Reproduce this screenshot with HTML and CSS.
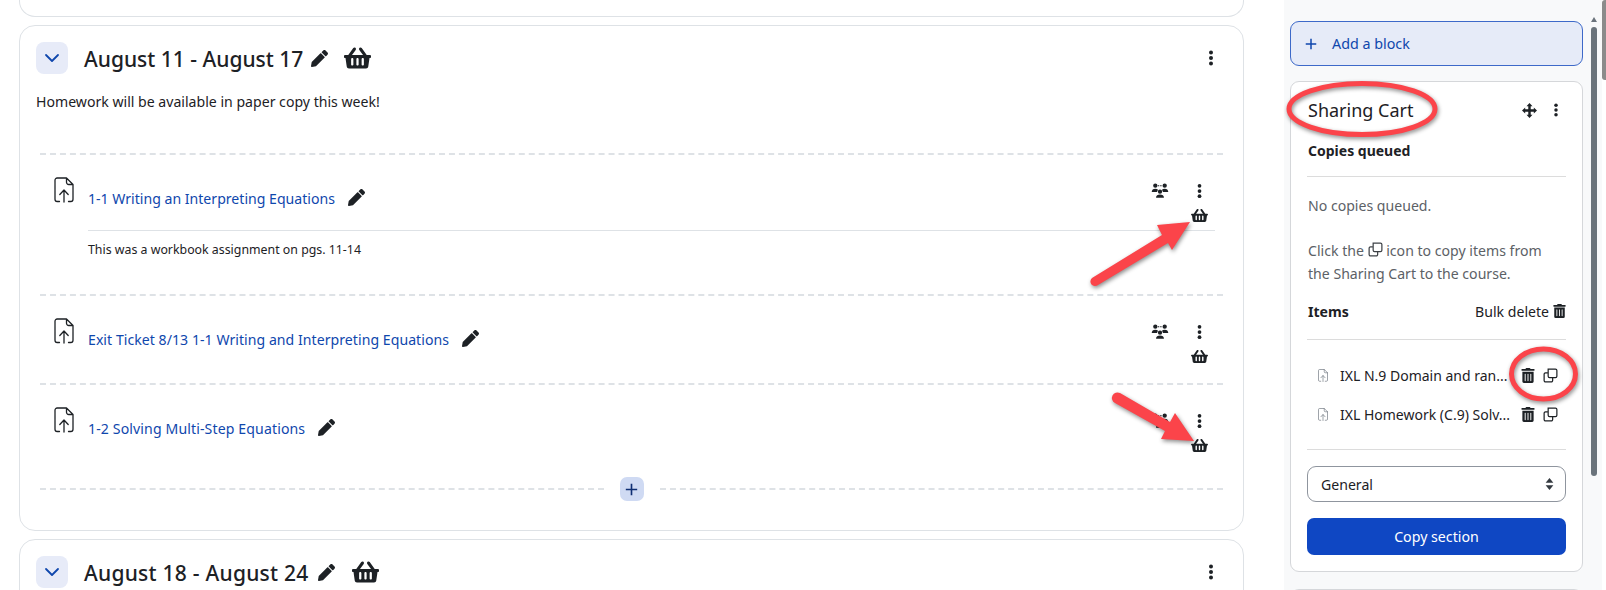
FILE: index.html
```html
<!DOCTYPE html>
<html lang="en">
<head>
<meta charset="utf-8">
<title>Sharing Cart</title>
<link rel="stylesheet" href="styles.css">
</head>
<body>
<svg class="defs" width="0" height="0" aria-hidden="true">
  <symbol id="i-pencil" viewBox="0 0 512 512"><path d="M497.9 142.1l-46.1 46.1c-4.7 4.7-12.3 4.7-17 0l-111-111c-4.7-4.7-4.7-12.3 0-17l46.1-46.1c18.7-18.7 49.1-18.7 67.9 0l60.1 60.1c18.8 18.7 18.8 49.1 0 67.9zM284.2 99.8L21.6 362.4.4 483.9c-2.9 16.4 11.4 30.6 27.8 27.8l121.5-21.3 262.6-262.6c4.7-4.7 4.7-12.3 0-17l-111-111c-4.8-4.7-12.4-4.7-17.1 0z"/></symbol>
  <symbol id="i-basket" viewBox="0 0 576 512"><path d="M576 216v16c0 13.255-10.745 24-24 24h-8l-26.113 182.788C514.509 462.435 494.257 480 470.37 480H105.63c-23.887 0-44.139-17.565-47.518-41.212L32 256h-8c-13.255 0-24-10.745-24-24v-16c0-13.255 10.745-24 24-24h67.341l106.78-146.821c10.395-14.292 30.407-17.453 44.701-7.058 14.293 10.395 17.453 30.408 7.058 44.701L170.477 192h235.046L326.12 82.821c-10.395-14.292-7.234-34.306 7.059-44.701 14.291-10.395 34.306-7.235 44.701 7.058L484.659 192H552c13.255 0 24 10.745 24 24zM312 392V280c0-13.255-10.745-24-24-24s-24 10.745-24 24v112c0 13.255 10.745 24 24 24s24-10.745 24-24zm112 0V280c0-13.255-10.745-24-24-24s-24 10.745-24 24v112c0 13.255 10.745 24 24 24s24-10.745 24-24zm-224 0V280c0-13.255-10.745-24-24-24s-24 10.745-24 24v112c0 13.255 10.745 24 24 24s24-10.745 24-24z"/></symbol>
  <symbol id="i-trash" viewBox="0 0 448 512"><path d="M32 464a48 48 0 0 0 48 48h288a48 48 0 0 0 48-48V128H32zm272-256a16 16 0 0 1 32 0v224a16 16 0 0 1-32 0zm-96 0a16 16 0 0 1 32 0v224a16 16 0 0 1-32 0zm-96 0a16 16 0 0 1 32 0v224a16 16 0 0 1-32 0zM432 32H312l-9.4-18.7A24 24 0 0 0 281.1 0H166.8a23.72 23.72 0 0 0-21.4 13.3L136 32H16A16 16 0 0 0 0 48v32a16 16 0 0 0 16 16h416a16 16 0 0 0 16-16V48a16 16 0 0 0-16-16z"/></symbol>
  <symbol id="i-kebab" viewBox="0 0 16 16"><circle cx="8" cy="2.5" r="2"/><circle cx="8" cy="8" r="2"/><circle cx="8" cy="13.5" r="2"/></symbol>
  <symbol id="i-copy" viewBox="0 0 16 16"><path fill="none" stroke="currentColor" stroke-width="1.3" d="M5.5 1.2h7.8a1.5 1.5 0 0 1 1.5 1.5v6.1a1.5 1.5 0 0 1-1.5 1.5H7a1.5 1.5 0 0 1-1.5-1.5z"/><path fill="none" stroke="currentColor" stroke-width="1.3" d="M5.2 5.2H2.7a1.5 1.5 0 0 0-1.5 1.5v6.6a1.5 1.5 0 0 0 1.5 1.5h6.1a1.5 1.5 0 0 0 1.5-1.5v-2.8"/></symbol>
  <symbol id="i-file" viewBox="0 0 20 26"><path fill="none" stroke="currentColor" stroke-width="1.3" stroke-linecap="round" stroke-linejoin="round" d="M5.5 24.5H3.2A2.2 2.2 0 0 1 1 22.3V3.2A2.2 2.2 0 0 1 3.2 1h9.3L19 7.5v14.8a2.2 2.2 0 0 1-2.2 2.2h-2.3M12.5 1v4.3a2.2 2.2 0 0 0 2.2 2.2H19M10 25V13.500M5.800 17.500L10 13l4.200 4.500"/></symbol>
  <symbol id="i-group" viewBox="0 0 20 16"><circle cx="4.800" cy="2.600" r="2.400"/><circle cx="15.200" cy="2.600" r="2.400"/><circle cx="10" cy="9.300" r="2.400"/><path d="M.8 9.800c0-2.500 1.600-3.800 4-3.800 1.300 0 2.300.4 3 1.100L6.600 9.800zM19.200 9.800c0-2.500-1.600-3.800-4-3.800-1.300 0-2.300.4-3 1.100l1.200 2.700zM5.600 16c0-2.300 1.900-3.500 4.400-3.500s4.400 1.200 4.400 3.500z"/><path fill="none" stroke="currentColor" stroke-width="1.200" stroke-dasharray="1.600 1" d="M7.600 2.800h4.800"/></symbol>
  <symbol id="i-move" viewBox="0 0 16 16"><path d="M8 0l3.200 3.400H9.300v3.300h3.300V4.800L16 8l-3.400 3.200V9.300H9.300v3.300h1.900L8 16l-3.200-3.400h1.900V9.300H3.400v1.900L0 8l3.400-3.200v1.900h3.300V3.400H4.800z"/></symbol>
  <symbol id="i-plus" viewBox="0 0 16 16"><path d="M7 1h2v6h6v2H9v6H7V9H1V7h6z"/></symbol>
  <symbol id="i-chevron" viewBox="0 0 16 16"><path fill="none" stroke="currentColor" stroke-width="1.800" stroke-linecap="round" stroke-linejoin="round" d="M2 5l6 6 6-6"/></symbol>
</svg>

<div class="page">
  <main class="course">
    <div class="section section-cut"></div>

    <section class="section">
      <header class="section-head">
        <button class="toggle"><svg class="ico ico-chevron"><use href="#i-chevron"/></svg></button>
        <h3 class="section-title">August 11 - August 17</h3>
        <svg class="ico ico-head-pencil"><use href="#i-pencil"/></svg>
        <svg class="ico ico-head-basket"><use href="#i-basket"/></svg>
        <svg class="ico ico-head-kebab"><use href="#i-kebab"/></svg>
      </header>
      <p class="summary">Homework will be available in paper copy this week!</p>
      <ul class="activities">
        <li class="activity activity-described">
          <svg class="ico ico-file"><use href="#i-file"/></svg>
          <div class="activity-body">
            <div class="activity-head">
              <a class="activity-link">1-1 Writing an Interpreting Equations</a>
              <svg class="ico ico-pencil"><use href="#i-pencil"/></svg>
              <div class="actions">
                <svg class="ico ico-group"><use href="#i-group"/></svg>
                <div class="action-stack">
                  <svg class="ico ico-kebab"><use href="#i-kebab"/></svg>
                  <svg class="ico ico-basket"><use href="#i-basket"/></svg>
                </div>
              </div>
            </div>
            <p class="activity-desc">This was a workbook assignment on pgs. 11-14</p>
          </div>
        </li>
        <li class="activity activity-plain">
          <svg class="ico ico-file"><use href="#i-file"/></svg>
          <div class="activity-body">
            <div class="activity-head activity-head-plain">
              <a class="activity-link link-track-s">Exit Ticket 8/13 1-1 Writing and Interpreting Equations</a>
              <svg class="ico ico-pencil"><use href="#i-pencil"/></svg>
              <div class="actions">
                <svg class="ico ico-group"><use href="#i-group"/></svg>
                <div class="action-stack">
                  <svg class="ico ico-kebab"><use href="#i-kebab"/></svg>
                  <svg class="ico ico-basket"><use href="#i-basket"/></svg>
                </div>
              </div>
            </div>
          </div>
        </li>
        <li class="activity activity-last">
          <svg class="ico ico-file"><use href="#i-file"/></svg>
          <div class="activity-body">
            <div class="activity-head activity-head-plain">
              <a class="activity-link link-track-m">1-2 Solving Multi-Step Equations</a>
              <svg class="ico ico-pencil"><use href="#i-pencil"/></svg>
              <div class="actions">
                <svg class="ico ico-group"><use href="#i-group"/></svg>
                <div class="action-stack">
                  <svg class="ico ico-kebab"><use href="#i-kebab"/></svg>
                  <svg class="ico ico-basket"><use href="#i-basket"/></svg>
                </div>
              </div>
            </div>
          </div>
        </li>
      </ul>
      <div class="add-row">
        <span class="add-line"></span>
        <button class="add-btn"><svg class="ico ico-add"><use href="#i-plus"/></svg></button>
        <span class="add-line"></span>
      </div>
    </section>

    <section class="section">
      <header class="section-head">
        <button class="toggle"><svg class="ico ico-chevron"><use href="#i-chevron"/></svg></button>
        <h3 class="section-title section-title-wide">August 18 - August 24</h3>
        <svg class="ico ico-head-pencil"><use href="#i-pencil"/></svg>
        <svg class="ico ico-head-basket"><use href="#i-basket"/></svg>
        <svg class="ico ico-head-kebab"><use href="#i-kebab"/></svg>
      </header>
    </section>
  </main>

  <aside class="side">
    <button class="add-block"><svg class="ico ico-block-plus"><use href="#i-plus"/></svg><span>Add a block</span></button>
    <section class="block">
      <header class="block-head">
        <h5 class="block-title">Sharing Cart</h5>
        <svg class="ico ico-move"><use href="#i-move"/></svg>
        <svg class="ico ico-block-kebab"><use href="#i-kebab"/></svg>
      </header>
      <h6 class="queued-title">Copies queued</h6>
      <hr class="rule rule-queued">
      <p class="muted no-copies">No copies queued.</p>
      <p class="muted hint">Click the <svg class="ico ico-copy-inline"><use href="#i-copy"/></svg> icon to copy items from<br>the Sharing Cart to the course.</p>
      <div class="items-head">
        <strong>Items</strong>
        <span class="bulk">Bulk delete <svg class="ico ico-trash"><use href="#i-trash"/></svg></span>
      </div>
      <hr class="rule rule-items">
      <ul class="items">
        <li class="item">
          <svg class="ico ico-item-file"><use href="#i-file"/></svg>
          <span class="item-name">IXL N.9 Domain and ran...</span>
          <svg class="ico ico-trash"><use href="#i-trash"/></svg>
          <svg class="ico ico-copy"><use href="#i-copy"/></svg>
        </li>
        <li class="item">
          <svg class="ico ico-item-file"><use href="#i-file"/></svg>
          <span class="item-name">IXL Homework (C.9) Solv...</span>
          <svg class="ico ico-trash"><use href="#i-trash"/></svg>
          <svg class="ico ico-copy"><use href="#i-copy"/></svg>
        </li>
      </ul>
      <hr class="rule rule-end">
      <div class="select">
        <span>General</span>
        <svg class="select-caret" viewBox="0 0 10 14"><path d="M5 0l4.500 5.500h-9zM5 14L.5 8.500h9z"/></svg>
      </div>
      <button class="copy-section">Copy section</button>
    </section>
    <section class="block block-next"></section>
  </aside>

  <div class="rail">
    <span class="rail-up"></span>
    <span class="rail-thumb"></span>
  </div>
  <div class="strip"><span class="strip-thumb"></span></div>
</div>

<svg class="annotations" viewBox="0 0 1606 590" aria-hidden="true">
  <g class="anno-shape">
    <path class="anno-fill" d="M1092 278L1162 235 1157 225 1190 222 1172 250 1168 243 1098 285a4.500 4.500 0 0 1-6-7z"/>
    <path class="anno-fill" d="M1120 393L1170 422 1175 413 1194 441 1161 439 1165 431 1115 403a5.500 5.500 0 0 1 5-10z"/>
    <ellipse class="anno-ring" cx="1362" cy="109" rx="73" ry="25.500"/>
    <ellipse class="anno-ring" cx="1543.500" cy="374" rx="32" ry="25"/>
  </g>
</svg>
</body>
</html>
```

FILE: styles.css
```css
* { box-sizing: border-box; }
html, body { margin: 0; padding: 0; height: 590px; overflow: hidden; background: #fff; }
body { font-family: "Noto Sans", "Open Sans", sans-serif; font-size: 14.1px; line-height: 21px; color: #1d2125; position: relative; }
.defs { position: absolute; }
ul { list-style: none; margin: 0; padding: 0; }
p, h3, h5, h6 { margin: 0; }
button { font: inherit; border: 0; padding: 0; cursor: pointer; }
.ico { display: block; flex: none; fill: currentColor; }

.page { display: grid; grid-template-columns: 1284px 307px 11px 4px; height: 590px; overflow: hidden; }

/* Course column */
.course { padding: 0 40px 0 19px; }
.section { border: 1px solid #dee2e6; border-radius: 16px; padding: 16px 20px 29px 16px; margin-bottom: 8px; background: #fff; }
.section-cut { height: 17px; border-top: 0; border-top-left-radius: 0; border-top-right-radius: 0; padding: 0; border-bottom-left-radius: 16px; border-bottom-right-radius: 16px; margin-bottom: 8px; }
.section-head { display: flex; align-items: center; height: 32px; }
.toggle { width: 32px; height: 32px; border-radius: 8px; background: #e7ebf8; color: #0f47ad; display: flex; align-items: center; justify-content: center; margin-right: 16px; }
.ico-chevron { width: 16px; height: 16px; }
.section-title { font-size: 21px; font-weight: 500; line-height: 32px; padding-top: 1px; color: #1d2125; }
.section-title-wide { letter-spacing: .25px; }
.ico-head-pencil { width: 17px; height: 17px; margin-left: 8px; }
.ico-head-basket { width: 27px; height: 24px; margin-left: 16px; }
.section-title-wide ~ .ico-head-pencil { margin-left: 9px; }
.section-title-wide ~ .ico-head-basket { margin-left: 17px; }
.ico-head-kebab { width: 16px; height: 16px; margin-left: auto; margin-right: 4px; }
.summary { margin-top: 17px; }

.activities { margin: 41px 0 0 4px; }
.activity { border-top: 2px dashed #dee2e6; padding: 22px 8px 0 14px; display: flex; gap: 14px; }
.activity-described { padding-bottom: 35px; }
.activity-plain { padding-bottom: 11px; }
.activity-last { padding-bottom: 16px; }
.ico-file { width: 20px; height: 26px; color: #1d2125; }
.activity-body { flex: 1; min-width: 0; }
.activity-head { display: flex; align-items: flex-start; height: 54px; border-bottom: 1px solid #dee2e6; padding-top: 11px; }
.activity-head-plain { border-bottom: 0; }
.activity-link { color: #0f47ad; }
.link-track-s { letter-spacing: .04px; }
.link-track-m { letter-spacing: .12px; }
.ico-pencil { width: 17px; height: 17px; margin: 1px 0 0 13px; }
.actions { margin-left: auto; margin-top: -9px; display: flex; gap: 18px; padding-right: 4px; }
.ico-group { width: 18px; height: 15px; margin-top: 4px; }
.action-stack { width: 24px; display: flex; flex-direction: column; align-items: center; gap: 9px; padding-top: 4px; }
.ico-kebab { width: 15px; height: 16px; }
.ico-basket { width: 17px; height: 15px; }
.activity-desc { font-size: 12.35px; line-height: 18px; margin-top: 10px; }

.add-row { display: flex; align-items: center; gap: 16px; margin-left: 4px; height: 24px; }
.add-line { flex: 1; border-top: 2px dashed #dee2e6; }
.add-btn { width: 24px; height: 24px; border-radius: 7px; background: #cfdaf3; color: #0f2f73; display: flex; align-items: center; justify-content: center; }
.ico-add { width: 13px; height: 13px; }

/* Block column */
.side { background: #f8f9fa; padding: 21px 8px 0 6px; }
.add-block { width: 293px; height: 45px; display: flex; align-items: center; border: 1px solid #3d69c9; border-radius: 9px; background: #e6ebf8; color: #0f47ad; padding-left: 14px; font-size: 14.3px; }
.ico-block-plus { width: 12px; height: 12px; margin-right: 15px; }
.block { width: 293px; border: 1px solid #d5d7da; border-radius: 9px; background: #fff; margin-top: 15px; padding: 16px 16px 16px 16px; }
.block-next { margin-top: 17px; height: 40px; }
.block-head { display: flex; align-items: center; height: 24px; }
.block-title { font-size: 18px; font-weight: 400; line-height: 24px; margin-left: 1px; }
.ico-move { width: 15px; height: 15px; margin-left: auto; }
.ico-block-kebab { width: 14px; height: 14px; margin: 0 3px 0 12px; }
.queued-title { font-size: 14px; font-weight: 700; line-height: 21px; margin: 18px 0 0 1px; }
.rule { border: 0; border-top: 1px solid #dcdcdc; margin: 0; }
.rule-queued { margin-top: 15px; }
.muted { color: #5c6166; margin-left: 1px; }
.no-copies { margin-top: 18px; }
.hint { margin-top: 23px; line-height: 23px; }
.ico-copy-inline { display: inline-block; width: 15px; height: 15px; vertical-align: -1px; color: #3d4146; }
.items-head { display: flex; justify-content: space-between; align-items: center; margin: 14px 0 0 1px; height: 24px; }
.bulk { display: inline-flex; align-items: center; gap: 4px; }
.ico-trash { width: 13px; height: 14px; }
.rule-items { margin-top: 16px; }
.items { padding-top: 16px; }
.item { display: flex; align-items: center; height: 39px; padding-left: 11px; }
.ico-item-file { width: 10px; height: 13px; color: #6a737b; margin-right: 12px; }
.item-name { flex: 1; white-space: nowrap; overflow: hidden; font-size: 14px; }
.item .ico-trash { width: 14px; height: 15px; margin-right: 8px; }
.ico-copy { width: 15px; height: 15px; margin-right: 8px; }
.rule-end { margin-top: 15px; }
.select { display: flex; align-items: center; justify-content: space-between; height: 36px; margin-top: 16px; padding: 0 11px 0 13px; border: 1px solid #8f959e; border-radius: 9px; background: #fff; }
.select-caret { width: 9px; height: 12px; fill: #343a40; }
.copy-section { display: block; width: 100%; height: 37px; margin-top: 16px; border-radius: 7px; background: #0f47c3; color: #fff; font-size: 14.2px; text-align: center; }

/* Scrollbars */
.rail { background: #f8f9fa; position: relative; padding-top: 17px; }
.rail-up { display: block; width: 0; height: 0; margin-left: 0; border-left: 3px solid transparent; border-right: 3px solid transparent; border-bottom: 5px solid #6a737b; }
.rail-thumb { display: block; width: 6px; height: 449px; margin-top: 5px; border-radius: 3px; background: #6a737b; }
.strip { background: #fff; }
.strip-thumb { display: block; width: 4px; height: 80px; border-radius: 3px 0 0 3px; background: #8b8b8b; }

/* Red annotations drawn on top of the screenshot */
.annotations { position: absolute; left: 0; top: 0; width: 1606px; height: 590px; pointer-events: none; }
.anno-shape { filter: drop-shadow(1px 2px 2px rgba(0,0,0,.45)); }
.anno-fill { fill: #fb444a; }
.anno-ring { fill: none; stroke: #fb444a; stroke-width: 5; }
```
